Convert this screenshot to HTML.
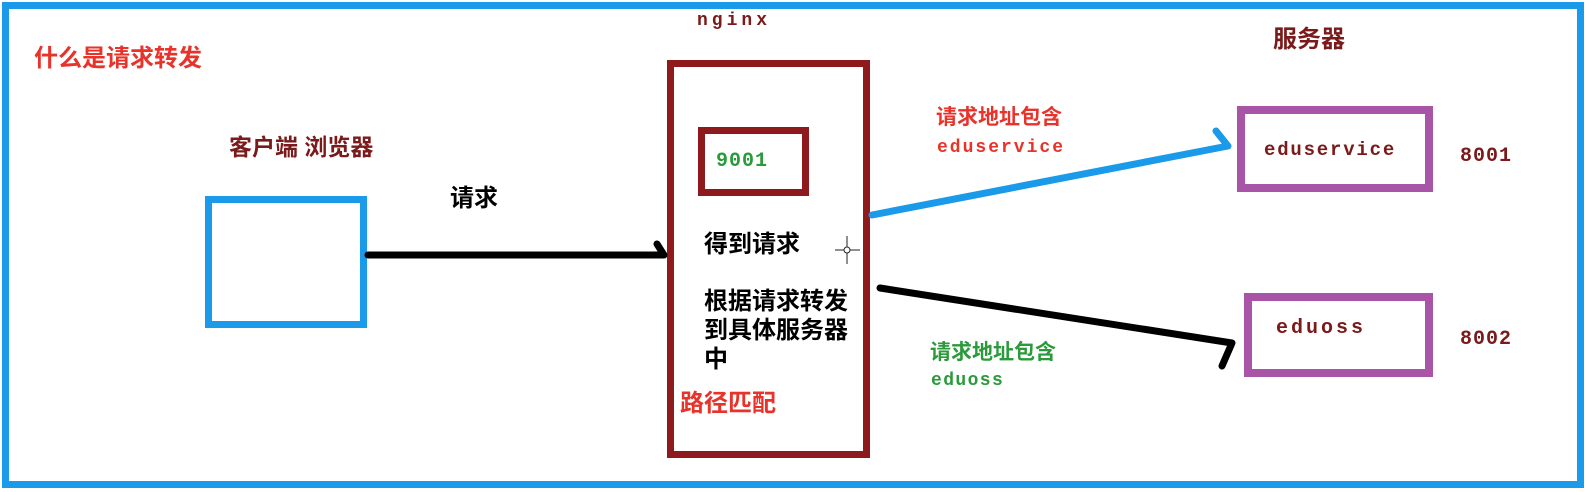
<!DOCTYPE html>
<html><head><meta charset="utf-8"><style>
body{margin:0;width:1586px;height:492px;background:#fff;overflow:hidden;position:relative;font-family:"Liberation Sans","Noto Sans CJK SC",sans-serif}
.b{position:absolute;box-sizing:border-box}
.t{position:absolute;white-space:nowrap;font-weight:bold;line-height:1}
.m{font-family:"Liberation Mono",monospace}
</style></head><body>
<div class="b" style="left:2px;top:2px;width:1582px;height:486px;border:7px solid #1a9ae8"></div>
<div class="b" style="left:667px;top:60px;width:203px;height:398px;border:7px solid #8e1a1e"></div>
<div class="b" style="left:698px;top:127px;width:111px;height:69px;border:7px solid #8e1a1e"></div>
<div class="b" style="left:205px;top:196px;width:162px;height:132px;border:7px solid #1a9ae8"></div>
<div class="b" style="left:1237px;top:106px;width:196px;height:86px;border:8px solid #a855a8"></div>
<div class="b" style="left:1244px;top:293px;width:189px;height:84px;border:8px solid #a855a8"></div>
<svg width="1586" height="492" style="position:absolute;left:0;top:0">
<path d="M368 255 L664 255 L657 244" stroke="#000" stroke-width="7" fill="none" stroke-linecap="round" stroke-linejoin="round"/>
<path d="M872 215 L1228 146 L1216 131" stroke="#1a9ae8" stroke-width="7" fill="none" stroke-linecap="round" stroke-linejoin="round"/>
<path d="M880 288 L1232 343 L1222 366" stroke="#000" stroke-width="7" fill="none" stroke-linecap="round" stroke-linejoin="round"/>
<g stroke="#222" stroke-width="1" fill="none"><line x1="847" y1="236" x2="847" y2="264"/><line x1="835" y1="250" x2="860" y2="250"/><circle cx="847" cy="250" r="3" fill="#fff"/></g>
</svg>
<div class="t" style="left:34px;top:47px;font-size:24px;color:#e8322a">什么是请求转发</div>
<div class="t" style="left:229px;top:136px;font-size:23px;color:#7a1a1a">客户端 浏览器</div>
<div class="t" style="left:450px;top:187px;font-size:24px;color:#000">请求</div>
<div class="t m" style="left:697px;top:12px;font-size:18px;letter-spacing:4px;color:#7a1a1a">nginx</div>
<div class="t m" style="left:716px;top:152px;font-size:20px;letter-spacing:1px;color:#2a9a3a">9001</div>
<div class="t" style="left:704px;top:233px;font-size:24px;color:#000">得到请求</div>
<div class="t" style="left:704px;top:287px;font-size:24px;color:#000;line-height:29px">根据请求转发<br>到具体服务器<br>中</div>
<div class="t" style="left:680px;top:392px;font-size:24px;color:#e8322a">路径匹配</div>
<div class="t" style="left:1273px;top:28px;font-size:24px;color:#7a1a1a">服务器</div>
<div class="t" style="left:936px;top:107px;font-size:21px;color:#e8322a">请求地址包含</div>
<div class="t m" style="left:937px;top:139px;font-size:18px;letter-spacing:2px;color:#e8322a">eduservice</div>
<div class="t m" style="left:1264px;top:141px;font-size:19px;letter-spacing:1.8px;color:#7a1a1a">eduservice</div>
<div class="t m" style="left:1460px;top:147px;font-size:20px;letter-spacing:1px;color:#7a1a1a">8001</div>
<div class="t m" style="left:1276px;top:319px;font-size:20px;letter-spacing:3px;color:#7a1a1a">eduoss</div>
<div class="t m" style="left:1460px;top:330px;font-size:20px;letter-spacing:1px;color:#7a1a1a">8002</div>
<div class="t" style="left:930px;top:342px;font-size:21px;color:#2a9a3a">请求地址包含</div>
<div class="t m" style="left:931px;top:372px;font-size:18px;letter-spacing:1.4px;color:#2a9a3a">eduoss</div>
</body></html>
